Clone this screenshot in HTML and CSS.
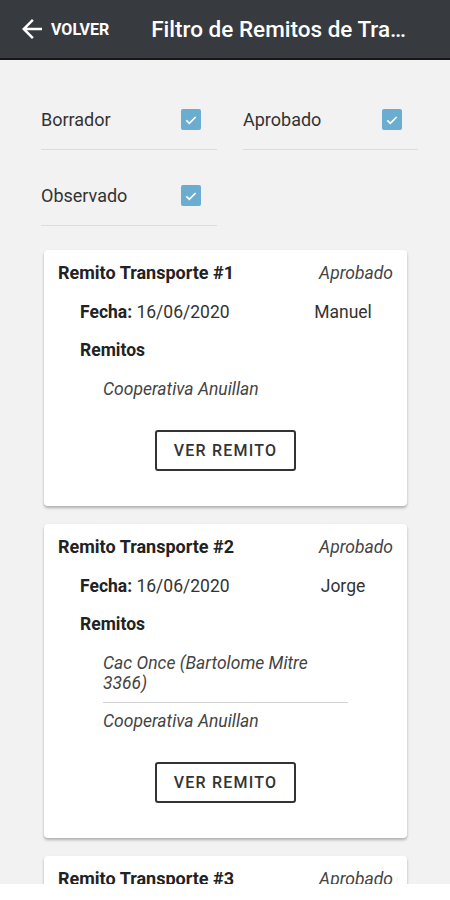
FILE: index.html
```html
<!DOCTYPE html>
<html lang="es">
  <head>
    <meta charset="UTF-8" />
    <meta name="viewport" content="width=device-width, initial-scale=1.0" />
    <title>Filtro de Remitos de Transporte</title>
    <link rel="stylesheet" href="styles.css">
  </head>
  <body>
    <header class="topbar">
      <a class="back" href="#">
        <svg class="back-icon" viewBox="0 0 24 24" width="30" height="30">
          <path fill="#fff" d="M20 11H7.83l5.59-5.59L12 4l-8 8 8 8 1.41-1.41L7.83 13H20v-2z" />
        </svg>
        <span>VOLVER</span>
      </a>
      <h1 class="title">Filtro de Remitos de Transporte</h1>
    </header>

    <section class="filters">
      <label class="filter">
        <span>Borrador</span>
        <span class="check"><svg viewBox="0 0 24 24"><path d="M5 12.5l4.5 4.5L19 7.5" /></svg></span>
      </label>
      <label class="filter">
        <span>Aprobado</span>
        <span class="check"><svg viewBox="0 0 24 24"><path d="M5 12.5l4.5 4.5L19 7.5" /></svg></span>
      </label>
      <label class="filter">
        <span>Observado</span>
        <span class="check"><svg viewBox="0 0 24 24"><path d="M5 12.5l4.5 4.5L19 7.5" /></svg></span>
      </label>
    </section>

    <div class="cards">
      <div class="card">
        <div class="card-head">
          <span class="card-title">Remito Transporte #1</span>
          <span class="status">Aprobado</span>
        </div>
        <div class="date-row">
          <span><b>Fecha:</b> 16/06/2020</span>
          <span class="person">Manuel</span>
        </div>
        <div class="label">Remitos</div>
        <ul class="remitos">
          <li>Cooperativa Anuillan</li>
        </ul>
        <button class="btn">VER REMITO</button>
      </div>

      <div class="card">
        <div class="card-head">
          <span class="card-title">Remito Transporte #2</span>
          <span class="status">Aprobado</span>
        </div>
        <div class="date-row">
          <span><b>Fecha:</b> 16/06/2020</span>
          <span class="person">Jorge</span>
        </div>
        <div class="label">Remitos</div>
        <ul class="remitos">
          <li>Cac Once (Bartolome Mitre 3366)</li>
          <li>Cooperativa Anuillan</li>
        </ul>
        <button class="btn">VER REMITO</button>
      </div>

      <div class="card">
        <div class="card-head">
          <span class="card-title">Remito Transporte #3</span>
          <span class="status">Aprobado</span>
        </div>
        <div class="date-row">
          <span><b>Fecha:</b> 16/06/2020</span>
          <span class="person">Jorge</span>
        </div>
      </div>
    </div>

    <div class="bottom-bar"></div>
  </body>
</html>
```

FILE: styles.css
```css
body {
  font-family: Roboto, "Noto Sans", sans-serif;
  background-color: #f2f2f2;
  margin: 0;
  color: #333;
}

.topbar {
  height: 58px;
  background-color: #373a3f;
  border-bottom: 2px solid #151617;
  display: flex;
  align-items: center;
  padding-left: 17px;
  padding-right: 34px;
}

.back {
  display: flex;
  align-items: center;
  color: #fff;
  text-decoration: none;
  font-size: 16px;
  font-weight: 700;
  flex-shrink: 0;
}

.back-icon {
  margin-right: 4px;
}

.title {
  margin: 0 0 0 42px;
  color: #fff;
  font-size: 22.5px;
  font-weight: 500;
  white-space: nowrap;
  overflow: hidden;
  text-overflow: ellipsis;
}

.filters {
  display: grid;
  grid-template-columns: 176px 175px;
  gap: 16px 26px;
  padding: 30px 0 0 41px;
}

.filter {
  height: 59px;
  display: flex;
  align-items: center;
  justify-content: space-between;
  border-bottom: 1px solid #dcdcdc;
  font-size: 18px;
  color: #333;
  padding-right: 16px;
}

.check {
  width: 20px;
  height: 21px;
  border-radius: 2px;
  background-color: #6badd1;
  display: flex;
  align-items: center;
  justify-content: center;
}

.check svg {
  width: 16px;
  height: 16px;
  fill: none;
  stroke: #fff;
  stroke-width: 2.6;
}

.cards {
  margin-top: 24px;
}

.card {
  background-color: #fff;
  margin: 0 43px 18px 44px;
  padding: 14px 14px 35px 14px;
  border-radius: 4px;
  box-shadow: 0 2px 3px rgba(0, 0, 0, 0.28);
  font-size: 17.5px;
}

.card-head {
  display: flex;
  justify-content: space-between;
  line-height: 18px;
}

.card-title {
  font-size: 18px;
  font-weight: 700;
  color: #222;
}

.status {
  font-style: italic;
  color: #444;
}

.date-row {
  display: flex;
  justify-content: space-between;
  line-height: 20px;
  margin-top: 20px;
  padding-left: 22px;
  color: #333;
}

.date-row b {
  color: #222;
}

.person {
  width: 100px;
  text-align: center;
}

.label {
  font-weight: 700;
  color: #222;
  line-height: 20px;
  margin-top: 18px;
  padding-left: 22px;
}

.remitos {
  list-style: none;
  margin: 11px 45px 0 45px;
  padding: 0;
}

.remitos li {
  font-style: italic;
  color: #444;
  line-height: 20px;
  padding: 8px 0 9px;
}

.remitos li + li {
  border-top: 1px solid #d4d4d4;
}

.btn {
  display: block;
  margin: 22px auto 0;
  width: 141px;
  height: 41px;
  background-color: #fff;
  border: 2px solid #333;
  border-radius: 3px;
  font-family: Roboto, sans-serif;
  font-size: 16px;
  font-weight: 500;
  letter-spacing: 1.2px;
  color: #333;
  cursor: pointer;
}

.bottom-bar {
  position: fixed;
  left: 0;
  right: 0;
  bottom: 0;
  height: 16px;
  background-color: #fff;
}
```
